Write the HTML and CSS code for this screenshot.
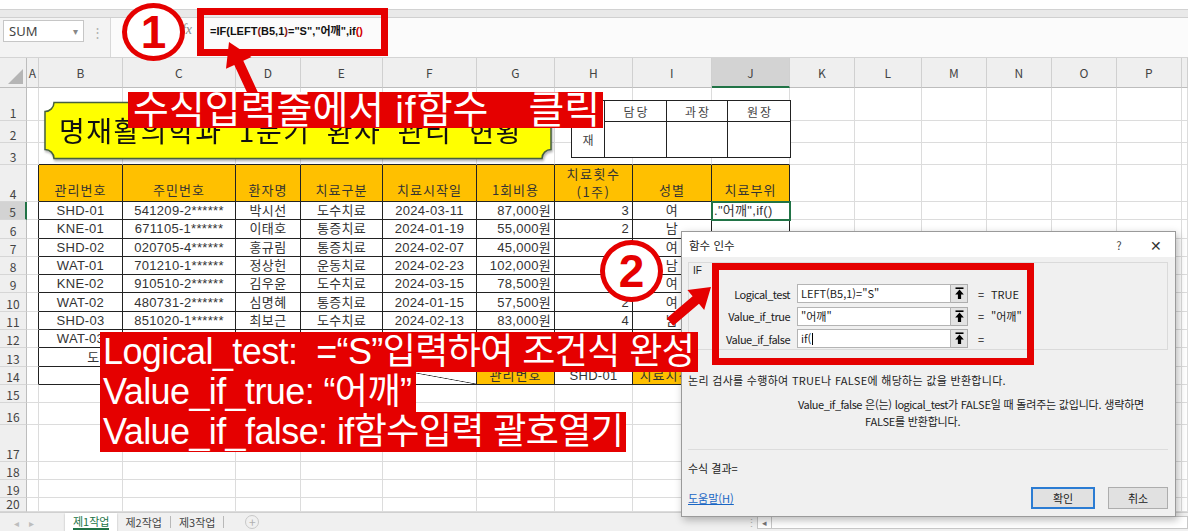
FILE: index.html
```html
<!DOCTYPE html>
<html lang="ko">
<head>
<meta charset="utf-8">
<title>함수 인수 - IF</title>
<link rel="stylesheet" href="styles.css">
</head>
<body>
<div class="app">
  <div class="topstrip"></div>
  <div class="fbar">
    <div class="namebox"><span>SUM</span><span class="dd">▾</span></div>
    <div class="vdots">⋮</div>
    <div class="fxarea">
      <div class="fxicons"><span class="fx">fx</span></div>
      <div class="formula">=IF<span class="p1">(</span>LEFT<span class="p2">(</span>B5,1<span class="p2">)</span>="S","어깨",if<span class="p3">()</span></div>
    </div>
  </div>

  <div class="sheet">
    <div class="corner"><svg width="18" height="17" viewBox="0 0 18 17"><path d="M17 1 V16 H2 Z" fill="#b5b5b5"/></svg></div>
    <div class="ch">A</div><div class="ch">B</div><div class="ch">C</div><div class="ch">D</div><div class="ch">E</div><div class="ch">F</div><div class="ch">G</div><div class="ch">H</div><div class="ch">I</div><div class="ch sel">J</div><div class="ch">K</div><div class="ch">L</div><div class="ch">M</div><div class="ch">N</div><div class="ch">O</div><div class="ch">P</div><div class="ch"></div>

    <div class="rh">1</div><div></div><div></div><div></div><div></div><div></div><div></div><div></div><div></div><div></div><div></div><div></div><div></div><div></div><div></div><div></div><div></div><div></div>
    <div class="rh">2</div><div></div><div></div><div></div><div></div><div></div><div></div><div></div><div></div><div></div><div></div><div></div><div></div><div></div><div></div><div></div><div></div><div></div>
    <div class="rh">3</div><div></div><div class="bb"></div><div class="bb"></div><div class="bb"></div><div class="bb"></div><div class="bb"></div><div class="bb"></div><div class="bb"></div><div class="bb"></div><div class="bb"></div><div></div><div></div><div></div><div></div><div></div><div></div><div></div>

    <div class="rh">4</div><div class="br"></div><div class="t hd">관리번호</div><div class="t hd">주민번호</div><div class="t hd">환자명</div><div class="t hd">치료구분</div><div class="t hd">치료시작일</div><div class="t hd">1회비용</div><div class="t hd two">치료횟수<br>(1주)</div><div class="t hd">성별</div><div class="t hd">치료부위</div><div></div><div></div><div></div><div></div><div></div><div></div><div></div>

    <div class="rh sel">5</div><div class="br"></div><div class="t">SHD-01</div><div class="t">541209-2******</div><div class="t">박시선</div><div class="t">도수치료</div><div class="t">2024-03-11</div><div class="t r">87,000원</div><div class="t r">3</div><div class="t">여</div><div class="t l act">."어깨",if()</div><div></div><div></div><div></div><div></div><div></div><div></div><div></div>
    <div class="rh">6</div><div class="br"></div><div class="t">KNE-01</div><div class="t">671105-1******</div><div class="t">이태호</div><div class="t">통증치료</div><div class="t">2024-01-19</div><div class="t r">55,000원</div><div class="t r">2</div><div class="t">남</div><div class="t"></div><div></div><div></div><div></div><div></div><div></div><div></div><div></div>
    <div class="rh">7</div><div class="br"></div><div class="t">SHD-02</div><div class="t">020705-4******</div><div class="t">홍규림</div><div class="t">통증치료</div><div class="t">2024-02-07</div><div class="t r">45,000원</div><div class="t r">2</div><div class="t">여</div><div class="t"></div><div></div><div></div><div></div><div></div><div></div><div></div><div></div>
    <div class="rh">8</div><div class="br"></div><div class="t">WAT-01</div><div class="t">701210-1******</div><div class="t">정상헌</div><div class="t">운동치료</div><div class="t">2024-02-23</div><div class="t r">102,000원</div><div class="t r">3</div><div class="t">남</div><div class="t"></div><div></div><div></div><div></div><div></div><div></div><div></div><div></div>
    <div class="rh">9</div><div class="br"></div><div class="t">KNE-02</div><div class="t">910510-2******</div><div class="t">김우윤</div><div class="t">도수치료</div><div class="t">2024-03-15</div><div class="t r">78,500원</div><div class="t r">2</div><div class="t">여</div><div class="t"></div><div></div><div></div><div></div><div></div><div></div><div></div><div></div>
    <div class="rh">10</div><div class="br"></div><div class="t">WAT-02</div><div class="t">480731-2******</div><div class="t">심명혜</div><div class="t">통증치료</div><div class="t">2024-01-15</div><div class="t r">57,500원</div><div class="t r">2</div><div class="t">여</div><div class="t"></div><div></div><div></div><div></div><div></div><div></div><div></div><div></div>
    <div class="rh">11</div><div class="br"></div><div class="t">SHD-03</div><div class="t">851020-1******</div><div class="t">최보근</div><div class="t">도수치료</div><div class="t">2024-02-13</div><div class="t r">83,000원</div><div class="t r">4</div><div class="t">남</div><div class="t"></div><div></div><div></div><div></div><div></div><div></div><div></div><div></div>
    <div class="rh">12</div><div class="br"></div><div class="t">WAT-03</div><div class="t">750316-1******</div><div class="t">한지훈</div><div class="t">운동치료</div><div class="t">2024-03-04</div><div class="t r">98,000원</div><div class="t r">3</div><div class="t">남</div><div class="t"></div><div></div><div></div><div></div><div></div><div></div><div></div><div></div>
    <div class="rh">13</div><div class="br"></div><div class="t span3">도수치료 환자 1회비용 평균</div><div class="t"></div><div class="t"></div><div class="t"></div><div class="t"></div><div class="t"></div><div class="t"></div><div></div><div></div><div></div><div></div><div></div><div></div><div></div>
    <div class="rh">14</div><div class="br"></div><div class="t span3">통증치료 환자 수</div><div class="t"></div><div class="t diag"></div><div class="t org">관리번호</div><div class="t">SHD-01</div><div class="t org">치료시작일</div><div class="t"></div><div></div><div></div><div></div><div></div><div></div><div></div><div></div>

    <div class="rh">15</div><div></div><div></div><div></div><div></div><div></div><div></div><div></div><div></div><div></div><div></div><div></div><div></div><div></div><div></div><div></div><div></div><div></div>
    <div class="rh">16</div><div></div><div></div><div></div><div></div><div></div><div></div><div></div><div></div><div></div><div></div><div></div><div></div><div></div><div></div><div></div><div></div><div></div>
    <div class="rh">17</div><div></div><div></div><div></div><div></div><div></div><div></div><div></div><div></div><div></div><div></div><div></div><div></div><div></div><div></div><div></div><div></div><div></div>
    <div class="rh">18</div><div></div><div></div><div></div><div></div><div></div><div></div><div></div><div></div><div></div><div></div><div></div><div></div><div></div><div></div><div></div><div></div><div></div>
    <div class="rh">19</div><div></div><div></div><div></div><div></div><div></div><div></div><div></div><div></div><div></div><div></div><div></div><div></div><div></div><div></div><div></div><div></div><div></div>
    <div class="rh">20</div><div></div><div></div><div></div><div></div><div></div><div></div><div></div><div></div><div></div><div></div><div></div><div></div><div></div><div></div><div></div><div></div><div></div>
  </div>

  <div class="tabbar">
    <div class="nav"><span>◂</span><span>▸</span></div>
    <div class="tab active"><span>제1작업</span></div>
    <div class="tab sep">제2작업</div>
    <div class="tab sep">제3작업</div>
    <div class="add">+</div>
    <div class="hscroll"><span class="hdots">⋮</span><span class="lbtn">◂</span><span class="track"></span></div>
  </div>
</div>

<div class="title-shape">
  <svg class="plaque" width="510" height="60" viewBox="0 0 510 60"><path d="M10 1.5 H498 A9 9 0 0 0 507 10.5 V48.5 A9 9 0 0 0 498 57.5 H10 A9 9 0 0 0 1 48.5 V10.5 A9 9 0 0 0 10 1.5 Z" fill="#ffff00" stroke="#45603f" stroke-width="1.5"/></svg>
  <div class="title-text">명재활의학과 1분기 환자 관리 현황</div>
</div>

<div class="approval">
  <div class="ap-lab">결<br>재</div>
  <div class="ap-h">담당</div><div class="ap-h">과장</div><div class="ap-h">원장</div>
  <div></div><div></div><div></div>
</div>

<div class="dialog">
  <div class="dlg-title"><span>함수 인수</span><span class="dlg-btns"><span class="q">?</span><span class="x">✕</span></span></div>
  <div class="dlg-body">
    <div class="group">
      <div class="glabel">IF</div>
      <div class="args">
        <div class="arg"><span class="an">Logical_test</span><span class="inp">LEFT(B5,1)="S"</span><span class="pick"><svg width="11" height="13" viewBox="0 0 11 13"><path d="M1.5 1.2 H9.5" stroke="#000" stroke-width="1.6"/><path d="M5.5 2.6 L1.2 7.4 H3.9 V12 H7.1 V7.4 H9.8 Z" fill="#000"/></svg></span><span class="eq">=</span><span class="val">TRUE</span></div>
        <div class="arg"><span class="an">Value_if_true</span><span class="inp">"어깨"</span><span class="pick"><svg width="11" height="13" viewBox="0 0 11 13"><path d="M1.5 1.2 H9.5" stroke="#000" stroke-width="1.6"/><path d="M5.5 2.6 L1.2 7.4 H3.9 V12 H7.1 V7.4 H9.8 Z" fill="#000"/></svg></span><span class="eq">=</span><span class="val">"어깨"</span></div>
        <div class="arg"><span class="an">Value_if_false</span><span class="inp">if(<span class="caret"></span></span><span class="pick"><svg width="11" height="13" viewBox="0 0 11 13"><path d="M1.5 1.2 H9.5" stroke="#000" stroke-width="1.6"/><path d="M5.5 2.6 L1.2 7.4 H3.9 V12 H7.1 V7.4 H9.8 Z" fill="#000"/></svg></span><span class="eq">=</span><span class="val"></span></div>
      </div>
    </div>
    <div class="desc">논리 검사를 수행하여 TRUE나 FALSE에 해당하는 값을 반환합니다.</div>
    <div class="argdesc"><div class="adn">Value_if_false</div><div class="adt">은(는) <span class="lat">logical_test</span>가 FALSE일 때 돌려주는 값입니다. 생략하면<br>FALSE를 반환합니다.</div></div>
    <div class="result">수식 결과=</div>
    <div class="foot"><span class="help">도움말(H)</span><div class="btns"><span class="btn ok">확인</span><span class="btn cancel">취소</span></div></div>
  </div>
</div>

<div class="redbox fbox"></div>
<div class="redbox dbox"></div>

<div class="circ c1">1</div>
<div class="circ c2">2</div>

<svg class="arrows" width="1188" height="531" viewBox="0 0 1188 531">
  <polygon points="229,42 251.5,57 243.3,60.8 259.2,95.1 250.2,99.3 234.3,65 226,68.8" fill="#e50000"/>
  <polygon points="711,287 704.2,309.9 699,303.8 673.2,325.8 666.8,318.2 692.6,296.2 687.4,290.1" fill="#e50000"/>
</svg>

<div class="ann ann1"><span>수식입력줄에서</span><span class="g1">if</span><span>함수</span><span class="g2">클릭</span></div>
<div class="ann2">
  <span class="l1">Logical_test: &nbsp;=“S”입력하여 조건식 완성</span>
  <span class="l2">Value_if_true: “어깨”</span>
  <span class="l3">Value_if_false: if함수입력 괄호열기</span>
</div>
</body>
</html>
```

FILE: styles.css
```css
* { box-sizing: border-box; margin: 0; padding: 0; }
html, body { width: 1188px; height: 531px; overflow: hidden; }
body { position: relative; background: #fff; font-family: "Noto Sans CJK KR", "Liberation Sans", sans-serif; }

.app { display: flex; flex-direction: column; width: 1188px; height: 531px; }

.topstrip { height: 18px; background: linear-gradient(#fff 0 9px, #d2d2d2 9px 10px, #e9e9e9 10px 17px, #d0d0d0 17px 18px); }

.fbar { height: 40px; display: flex; align-items: flex-start; background: #f3f3f3; border-bottom: 1px solid #d4d4d4; }
.namebox { margin: 2px 0 0 3px; width: 81px; height: 22px; background: #fff; border: 1px solid #c6c6c6; display: flex; align-items: center; justify-content: space-between; padding: 0 5px 0 5px; font: 13px "Noto Sans", "Liberation Sans", sans-serif; color: #444; }
.dd { font-size: 10px; color: #888; }
.vdots { width: 26px; text-align: center; color: #b0b0b0; font-size: 13px; margin-top: 4px; }
.fxarea { flex: 1; height: 39px; background: #fbfbfb; display: flex; align-items: flex-start; border-left: 1px solid #d8d8d8; }
.fxicons { width: 89px; display: flex; justify-content: flex-end; align-items: center; height: 24px; color: #888; padding-right: 8px; }
.fx { font-family: "Liberation Serif", serif; font-style: italic; font-size: 14px; }
.formula { padding: 6px 0 0 10px; font: bold 11px/14px "Liberation Sans", "Noto Sans CJK KR", sans-serif; color: #111; white-space: nowrap; }
.formula .p1 { color: #111; }
.formula .p2 { color: #8b1a1a; }
.formula .p3 { color: #d40000; }

/* sheet grid */
.sheet {
  display: grid;
  grid-template-columns: 27px 12px 84px 113px 65px 82px 94px 78px 78px 79px 78px 65px 67px 65px 65px 65px 65px 6px;
  grid-template-rows: 30px 33px 22px 22px 37px repeat(11, 18.3px) 22px 37px 18px 18px 13.7px;
  height: 454px;
  overflow: hidden;
  font: 13px "Liberation Sans", "Noto Sans CJK KR", sans-serif;
  color: #333;
  letter-spacing: 0.3px;
}
.sheet > div { border-right: 1px solid #dcdcdc; border-bottom: 1px solid #dcdcdc; display: flex; align-items: center; justify-content: center; text-align: center; white-space: nowrap; line-height: 15px; }
.sheet > .corner { background: #efefef; border-right-color: #bdbdbd; border-bottom-color: #bdbdbd; align-items: flex-end; justify-content: flex-end; padding: 0 2px 2px 0; }
.sheet > .ch { background: #efefef; border-right-color: #d0d0d0; border-bottom-color: #bdbdbd; font: 12px/15px "Noto Sans CJK KR", sans-serif; color: #444; }
.sheet > .ch.sel { background: #d3d3d3; border-bottom: 2px solid #217346; }
.sheet > .rh { background: #efefef; border-right-color: #bdbdbd; border-bottom-color: #d6d6d6; font: 12px/15px "Noto Sans CJK KR", sans-serif; color: #444; align-items: flex-end; padding-bottom: 0; letter-spacing: 0; }
.sheet > .rh.sel { background: #d3d3d3; border-right: 2px solid #217346; }
.sheet > .t { border-right-color: #222; border-bottom-color: #222; }
.sheet > .bb { border-bottom-color: #222; }
.sheet > .br { border-right-color: #222; }
.sheet > .hd { background: #ffc000; align-items: flex-end; padding-bottom: 4px; letter-spacing: 1px; font-family: "Noto Sans CJK KR", sans-serif; color: #333; }
.sheet > .hd.two { align-items: center; padding-bottom: 0; line-height: 18px; letter-spacing: 1.5px; }
.sheet > .r { justify-content: flex-end; padding-right: 3px; }
.sheet > .l { justify-content: flex-start; padding-left: 2px; }
.sheet > .act { outline: 2px solid #217346; outline-offset: -1px; position: relative; z-index: 1; }
.sheet > .span3 { grid-column: span 3; letter-spacing: 1px; }
.sheet > .org { background: #ffc000; letter-spacing: 1px; }
.sheet > .diag { background: linear-gradient(to top right, transparent calc(50% - 0.7px), #333 50%, transparent calc(50% + 0.7px)); }

/* tabs */
.tabbar { height: 19px; display: flex; align-items: stretch; background: #f0f0f0; border-top: 1px solid #d0d0d0; font: 11px "Noto Sans CJK KR", sans-serif; color: #444; }
.nav { width: 65px; display: flex; align-items: center; gap: 10px; padding-left: 14px; color: #bdbdbd; font-size: 10px; }
.tab { display: flex; align-items: center; padding: 0 8px; }
.tab.active { background: #fff; color: #217346; box-shadow: 0 1px 2px rgba(0,0,0,.25); }
.tab.active span { border-bottom: 2px solid #217346; line-height: 14px; }
.tab.sep::after { content: ""; display: block; width: 1px; height: 12px; background: #b8b8b8; margin-left: 8px; margin-right: -8px; }
.add { margin-left: 21px; width: 14px; height: 14px; align-self: center; border: 1px solid #c8c8c8; border-radius: 50%; color: #b0b0b0; font-size: 12px; line-height: 11px; text-align: center; }
.hscroll { margin-left: auto; width: 443px; display: flex; align-items: center; }
.hdots { width: 12px; color: #b0b0b0; text-align: center; }
.lbtn { width: 15px; height: 13px; border: 1px solid #c8c8c8; background: #fff; color: #777; font-size: 9px; line-height: 11px; text-align: center; }
.track { flex: 1; height: 13px; border: 1px solid #c8c8c8; border-left: 0; background: #fff; }

/* floating shapes on the sheet */
.title-shape { position: absolute; left: 44px; top: 101px; width: 510px; height: 60px; display: grid; filter: drop-shadow(1px 2px 1px rgba(0,0,0,.3)); }
.title-shape > * { grid-area: 1 / 1; }
.title-text { display: flex; align-items: center; justify-content: center; padding: 0 16px 2px 0; font: 28px "Noto Sans CJK KR", sans-serif; letter-spacing: 1.5px; word-spacing: 7px; color: #111; white-space: nowrap; }

.approval { position: absolute; left: 571px; top: 100px; display: grid; grid-template-columns: 33px 62px 61px 63px; grid-template-rows: 21px 36px; border-left: 1px solid #222; border-top: 1px solid #222; background: #fff; font: 12px "Noto Sans CJK KR", sans-serif; color: #444; }
.approval > div { border-right: 1px solid #222; border-bottom: 1px solid #222; display: flex; align-items: center; justify-content: center; text-align: center; }
.approval > .ap-lab { grid-row: span 2; line-height: 22px; }
.approval > .ap-h { letter-spacing: 2px; padding-left: 2px; }

/* dialog */
.dialog { position: absolute; left: 681px; top: 231px; width: 495px; height: 286px; background: #f0f0f0; border: 1px solid #9a9a9a; box-shadow: 2px 3px 8px rgba(0,0,0,.28); font: 11px "Noto Sans CJK KR", sans-serif; color: #222; display: flex; flex-direction: column; }
.dlg-title { height: 25px; background: #fff; display: flex; align-items: center; justify-content: space-between; padding-left: 7px; font-size: 11.5px; }
.dlg-btns { display: flex; align-items: center; }
.dlg-btns .q { width: 20px; text-align: center; color: #444; margin-right: 17px; }
.dlg-btns .x { width: 20px; text-align: center; font-size: 14px; color: #333; margin-right: 9px; }
.dlg-body { flex: 1; display: flex; flex-direction: column; padding: 5px 7px 7px 6px; }
.group { height: 88px; border: 1px solid #dadada; display: flex; flex-direction: column; }
.glabel { height: 14px; line-height: 14px; margin: 1px 0 0 4px; font-family: "Liberation Sans", sans-serif; font-size: 10px; }
.args { display: flex; flex-direction: column; gap: 3.5px; margin-top: 6px; }
.arg { display: flex; align-items: center; height: 19px; }
.an { width: 101px; text-align: right; margin-right: 7px; white-space: nowrap; letter-spacing: -0.5px; }
.inp { width: 154px; height: 19px; background: #fff; border: 1px solid #b4b4b4; padding-left: 3px; line-height: 17px; white-space: nowrap; display: flex; align-items: center; }
.caret { display: inline-block; width: 1px; height: 12px; background: #000; margin-left: 1px; }
.pick { width: 17px; height: 19px; background: #e3e3e3; border: 1px solid #adadad; border-left: 0; display: flex; align-items: center; justify-content: center; }
.eq { margin-left: 10px; width: 13px; }
.val { white-space: nowrap; }
.desc { margin-top: 23px; line-height: 14px; white-space: nowrap; letter-spacing: 0.3px; }
.argdesc { display: flex; margin-top: 9px; line-height: 17px; }
.adn { margin-left: 110px; width: 67px; white-space: nowrap; letter-spacing: -0.5px; }
.adt { white-space: nowrap; letter-spacing: -0.2px; }
.adt .lat { letter-spacing: -0.5px; }
.result { margin-top: 19px; padding-top: 11px; border-top: 1px solid #dcdcdc; line-height: 14px; }
.foot { margin-top: 12px; display: flex; align-items: center; justify-content: space-between; }
.help { color: #1a66c4; text-decoration: underline; }
.btns { display: flex; gap: 13px; }
.btn { height: 22px; display: flex; align-items: center; justify-content: center; background: #e1e1e1; border: 1px solid #adadad; }
.btn.ok { width: 64px; border: 2px solid #2b7cd3; }
.btn.cancel { width: 60px; }

/* annotations */
.redbox { position: absolute; border: 7px solid #e50000; }
.fbox { left: 197px; top: 8px; width: 191px; height: 48px; }
.dbox { left: 712px; top: 263px; width: 322px; height: 102px; }

.circ { position: absolute; border: 5px solid #e50000; border-radius: 50%; background: #fff; color: #e50000; font: bold 46px/1 "Liberation Sans", sans-serif; display: flex; align-items: center; justify-content: center; }
.c1 { left: 122px; top: 3px; width: 63px; height: 58px; }
.c2 { left: 600px; top: 240px; width: 63px; height: 62px; }

.arrows { position: absolute; left: 0; top: 0; pointer-events: none; }

.ann { position: absolute; color: #fff; background: #e50000; white-space: nowrap; }
.ann1 { left: 128px; top: 92px; width: 475px; height: 36px; padding-left: 5px; display: flex; align-items: center; font: 39px/36px "Liberation Sans", "Noto Sans CJK KR", sans-serif; letter-spacing: 0; }
.ann1 .g1 { margin-left: 11px; letter-spacing: 1px; }
.ann1 .g2 { margin-left: 40px; }
.ann2 { position: absolute; left: 100px; top: 332px; display: flex; flex-direction: column; align-items: flex-start; }
.ann2 span { background: #e50000; color: #fff; white-space: nowrap; font: 36px/40px "Liberation Sans", "Noto Sans CJK KR", sans-serif; padding: 0 3px; letter-spacing: -0.6px; }
.ann2 .l1 { width: 598px; }
.ann2 .l2 { width: 316px; }
.ann2 .l3 { width: 526px; }
```
